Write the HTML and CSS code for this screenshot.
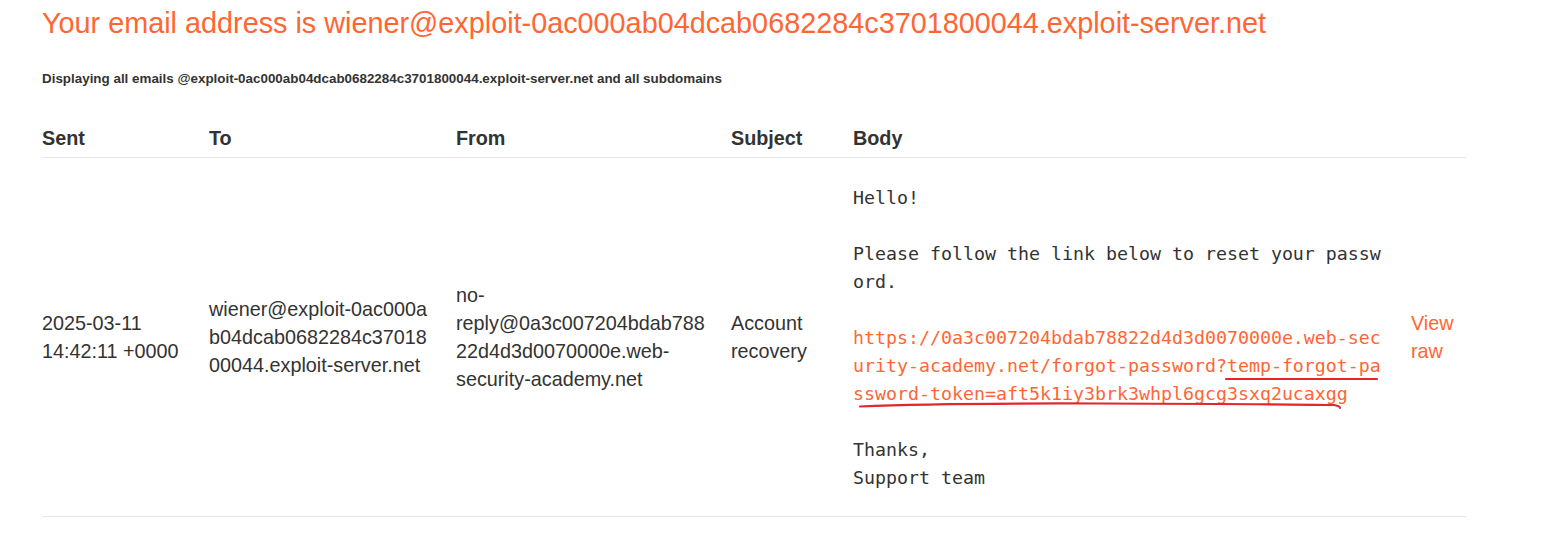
FILE: index.html
```html
<!DOCTYPE html>
<html>
<head>
<meta charset="utf-8">
<title>Exploit Server: Email client</title>
<link rel="stylesheet" href="styles.css">
</head>
<body>
<div class="page">
  <h1 class="title">Your email address is wiener@exploit-0ac000ab04dcab0682284c3701800044.exploit-server.net</h1>
  <h4 class="subtitle">Displaying all emails @exploit-0ac000ab04dcab0682284c3701800044.exploit-server.net and all subdomains</h4>
  <table class="emails">
    <colgroup>
      <col class="c-sent">
      <col class="c-to">
      <col class="c-from">
      <col class="c-subject">
      <col class="c-body">
      <col class="c-raw">
    </colgroup>
    <thead>
      <tr>
        <th>Sent</th>
        <th>To</th>
        <th>From</th>
        <th>Subject</th>
        <th>Body</th>
        <th></th>
      </tr>
    </thead>
    <tbody>
      <tr>
        <td class="sent">2025-03-11<br>14:42:11 +0000</td>
        <td class="to">wiener@exploit-0ac000ab04dcab0682284c3701800044.exploit-server.net</td>
        <td class="from">no-reply@0a3c007204bdab78822d4d3d0070000e.web-security-academy.net</td>
        <td class="subject">Account recovery</td>
        <td class="body"><pre class="mail">Hello!

Please follow the link below to reset your password.

<a class="mlink" href="#">https://0a3c007204bdab78822d4d3d0070000e.web-security-academy.net/forgot-password?temp-forgot-password-token=aft5k1iy3brk3whpl6gcg3sxq2ucaxgg</a>

Thanks,
Support team</pre></td>
        <td class="raw"><a class="rawlink" href="#">View raw</a></td>
      </tr>
    </tbody>
  </table>
</div>
<svg class="annot" width="1557" height="546" viewBox="0 0 1557 546">
  <path d="M1226 379 L1377 379" stroke="#e3262b" stroke-width="2.2" fill="none" stroke-linecap="round"/>
  <path d="M860 406.5 Q 940 403 1100 403.5 Q 1280 404 1334 405 Q 1340 406 1340 408" stroke="#e3262b" stroke-width="2.2" fill="none" stroke-linecap="round"/>
</svg>
</body>
</html>
```
FILE: styles.css
```css
html, body {
  margin: 0;
  padding: 0;
  background: #ffffff;
}
body {
  font-family: "Liberation Sans", Arial, sans-serif;
  color: #333332;
  position: relative;
}
.page {
  padding: 0 0 0 42px;
  width: 1424px;
}
.title {
  margin: 6px 0 0;
  font-size: 28.8px;
  line-height: 34px;
  font-weight: normal;
  color: #ff6633;
  white-space: nowrap;
}
.subtitle {
  margin: 31px 0 0;
  font-size: 13.4px;
  line-height: 16px;
  font-weight: bold;
  color: #333332;
}
.emails {
  margin-top: 37px;
  width: 1424px;
  table-layout: fixed;
  border-collapse: collapse;
  font-size: 19.8px;
  line-height: 28px;
}
.c-sent { width: 167px; }
.c-to { width: 247px; }
.c-from { width: 275px; }
.c-subject { width: 122px; }
.c-body { width: 558px; }
.c-raw { width: 55px; }
.emails th {
  text-align: left;
  font-weight: bold;
  padding: 0 0 5px 0;
  border-bottom: 1px solid #e6e6e6;
  vertical-align: bottom;
}
.emails td {
  vertical-align: middle;
  padding: 0;
  border-bottom: 1px solid #e6e6e6;
}
.to {
  padding-right: 23px !important;
  word-break: break-all;
}
.from {
  padding-right: 21px !important;
  overflow-wrap: anywhere;
}
.body {
  padding: 26px 0 24px 0 !important;
}
.mail {
  margin: 0;
  width: 534px;
  font-family: "DejaVu Sans Mono", "Liberation Mono", monospace;
  font-size: 18.27px;
  line-height: 28px;
  white-space: pre-wrap;
  word-break: break-all;
  color: #333332;
}
.mlink {
  color: #ff6633;
  text-decoration: none;
}
.rawlink {
  color: #ff6633;
  text-decoration: none;
}
.annot {
  position: absolute;
  top: 0;
  left: 0;
  pointer-events: none;
}
```
